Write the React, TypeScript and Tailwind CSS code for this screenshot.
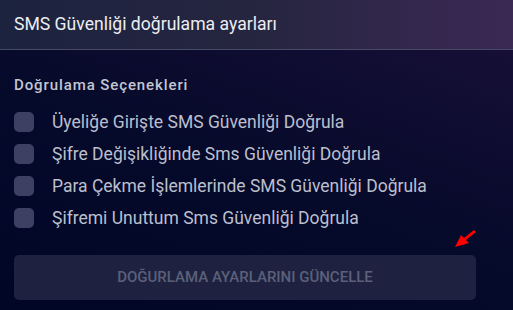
import { useState } from 'react';

const options = [
  'Üyeliğe Girişte SMS Güvenliği Doğrula',
  'Şifre Değişikliğinde Sms Güvenliği Doğrula',
  'Para Çekme İşlemlerinde SMS Güvenliği Doğrula',
  'Şifremi Unuttum Sms Güvenliği Doğrula',
];

export default function App() {
  const [checked, setChecked] = useState<boolean[]>([false, false, false, false]);

  return (
    <div className="w-[513px] h-[310px] overflow-hidden font-['Roboto',sans-serif] bg-[linear-gradient(20deg,#010626_0%,#050a2a_45%,#1a0f38_100%)]">
      <div className="h-[50px] flex items-center px-[14px] border-b border-[#454a66] bg-[linear-gradient(90deg,#1c233f_0%,#262540_50%,#3b2954_100%)]">
        <h1 className="text-[17.6px] text-[#ecedf2]">SMS Güvenliği doğrulama ayarları</h1>
      </div>
      <div className="px-[14px] pt-[25px]">
        <h2 className="text-[15px] leading-[20px] tracking-[0.9px] text-[#c3c6d2] font-medium mb-[17px]">Doğrulama Seçenekleri</h2>
        <div className="flex flex-col gap-[12px]">
          {options.map((o, i) => (
            <label key={i} className="flex items-center gap-[18px] h-[20px] cursor-pointer">
              <input
                type="checkbox"
                checked={checked[i]}
                onChange={() => setChecked(c => c.map((v, j) => (j === i ? !v : v)))}
                className="appearance-none w-[20px] h-[20px] rounded-[5px] bg-[#3d4063] checked:bg-[#5b5fa0]"
              />
              <span className="text-[17.5px] text-[#bcbfcd]">{o}</span>
            </label>
          ))}
        </div>
        <div className="relative mt-[27px]">
          <svg className="absolute left-[439px] top-[-28px]" width="26" height="22" viewBox="0 0 26 22">
            <path d="M2 20 L8 8 L11 11 L21 3 L23 5 L13 13 L16 16 Z" fill="#ff0000" />
          </svg>
          <button className="w-[462px] h-[45px] rounded-[5px] bg-[#1e2240] text-[15px] font-medium text-[#5c6079]">
            DOĞURLAMA AYARLARINI GÜNCELLE
          </button>
        </div>
      </div>
    </div>
  );
}
